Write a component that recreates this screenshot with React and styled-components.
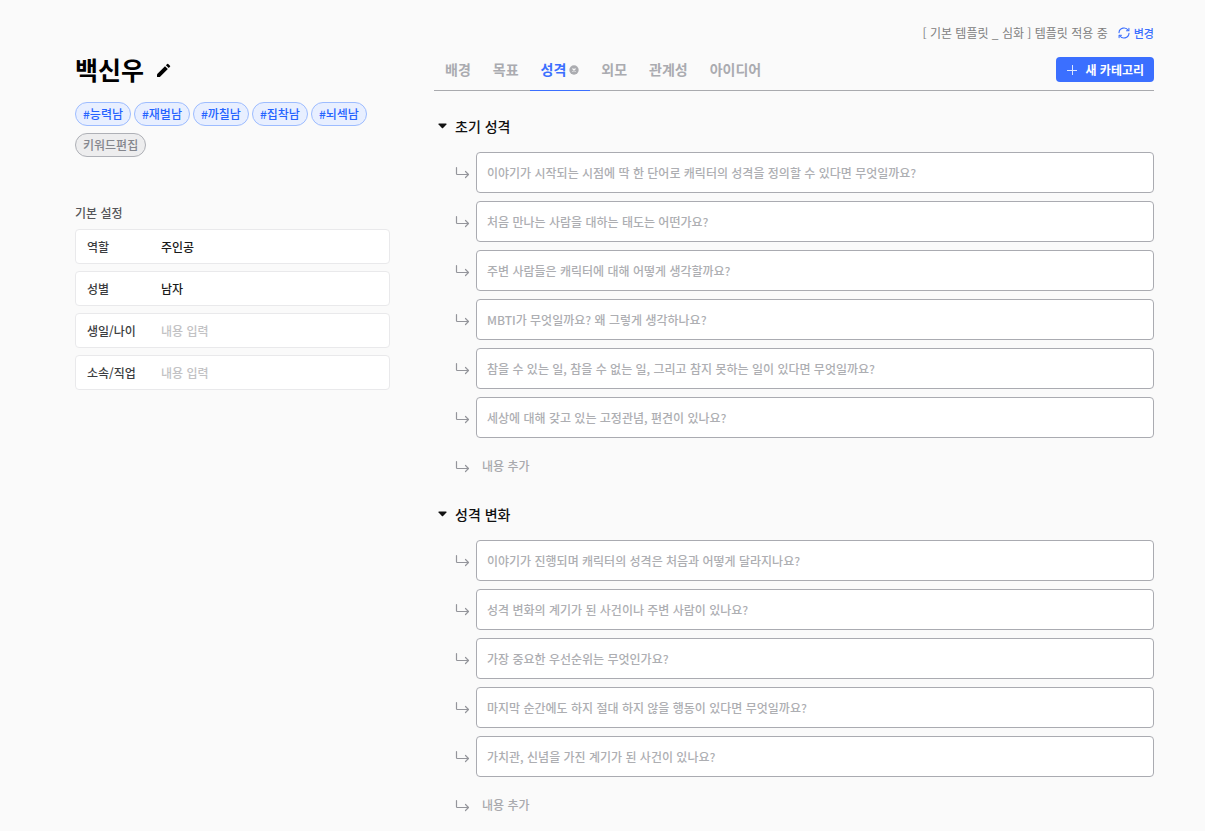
import React, { useState } from "react";
import styled, { createGlobalStyle } from "styled-components";

const GlobalStyle = createGlobalStyle`
  *, *::before, *::after { box-sizing: border-box; }
  body {
    margin: 0;
    background: #fafafa;
    color: #1a1a1a;
    font-family: "Noto Sans CJK KR", "Noto Sans KR", "Noto Sans CJK JP", sans-serif;
    font-size: 12px;
    line-height: 20px;
  }
  button, input { font: inherit; color: inherit; }
  button { border: 0; padding: 0; background: none; cursor: pointer; }
  h1, h2, p { margin: 0; }
  svg { display: block; flex: none; }
`;

const Page = styled.main`
  display: grid;
  grid-template-columns: 315px minmax(0, 1fr);
  column-gap: 44px;
  padding: 23px 51px 16px 75px;
`;

const Profile = styled.aside`
  padding-top: 28px;
`;

const NameRow = styled.div`
  display: flex;
  align-items: center;
  gap: 12px;
`;

const Name = styled.h1`
  color: #000;
  font-size: 25px;
  line-height: 36px;
  font-weight: 700;
`;

const Keywords = styled.div`
  display: flex;
  flex-wrap: wrap;
  gap: 7px 3px;
  margin-top: 15px;
`;

const Keyword = styled.span`
  height: 24px;
  padding: 0 7px;
  border: 1px solid #9dbcff;
  border-radius: 12px;
  background: #e8efff;
  color: #2563ff;
  line-height: 22px;
  font-weight: 500;
`;

const KeywordEdit = styled.button`
  height: 24px;
  padding: 0 7px;
  border: 1px solid #aeb0b6;
  border-radius: 12px;
  background: #ededee;
  color: #84868d;
  line-height: 20px;
  font-weight: 500;
`;

const SettingsTitle = styled.h2`
  margin: 46px 0 6px;
  color: #555559;
  font-size: 12px;
  line-height: 20px;
  font-weight: 500;
`;

const Settings = styled.div`
  display: grid;
  gap: 7px;
`;

const Setting = styled.label`
  display: flex;
  align-items: center;
  height: 35px;
  padding: 0 11px;
  border: 1px solid #e9e9eb;
  border-radius: 4px;
  background: #fff;
`;

const SettingLabel = styled.span`
  flex: none;
  width: 74px;
  color: #3c3d40;
  font-weight: 500;
`;

const SettingInput = styled.input`
  flex: 1;
  min-width: 0;
  height: 24px;
  padding: 0;
  border: 0;
  outline: 0;
  background: none;
  font-weight: 500;
  &::placeholder { color: #c2c2c4; opacity: 1; }
`;

const TemplateBar = styled.div`
  display: flex;
  justify-content: flex-end;
  align-items: center;
  gap: 10px;
  color: #808080;
`;

const ChangeButton = styled.button`
  display: flex;
  align-items: center;
  gap: 4px;
  color: #3b6fff;
  font-size: 11px;
  font-weight: 500;
`;

const TabBar = styled.div`
  display: flex;
  justify-content: space-between;
  margin-top: 9px;
  border-bottom: 1px solid #a9aaae;
`;

const TabList = styled.div`
  display: flex;
  margin-bottom: -1px;
`;

const Tab = styled.div`
  display: flex;
  align-items: center;
  gap: 3px;
  height: 39px;
  padding: 0 11px 4px;
  border-bottom: 1px solid ${(p) => (p.$active ? "#3b6fff" : "transparent")};
  color: ${(p) => (p.$active ? "#3b6fff" : "#aaabb0")};
`;

const TabButton = styled.button`
  font-size: 14px;
  font-weight: 700;
`;

const NewCategory = styled.button`
  display: flex;
  align-items: center;
  gap: 8px;
  height: 25px;
  margin-top: 5px;
  padding: 0 10px 0 11px;
  border-radius: 4px;
  background: #3b6fff;
  color: #fff;
  font-weight: 700;
`;

const Section = styled.section`
  margin-top: ${(p) => (p.$first ? 25 : 28)}px;
`;

const SectionTitle = styled.h2`
  font-size: 14px;
  line-height: 20px;
  font-weight: 500;
`;

const Toggle = styled.button`
  display: flex;
  align-items: center;
  gap: 8px;
  padding-left: 4px;
  color: #111;
`;

const Questions = styled.div`
  display: grid;
  gap: 8px;
  margin-top: 16px;
  padding-left: 21px;
`;

const Question = styled.label`
  display: flex;
  align-items: center;
  gap: 6px;
`;

const QuestionInput = styled.input`
  flex: 1;
  min-width: 0;
  height: 41px;
  padding: 0 10px;
  border: 1px solid #aaabb1;
  border-radius: 4px;
  outline: 0;
  background: #fff;
  font-weight: 500;
  &::placeholder { color: #adaeb2; opacity: 1; }
`;

const AddButton = styled.button`
  display: flex;
  align-items: center;
  gap: 12px;
  margin: 18px 0 0 21px;
  color: #a8a9ad;
  font-weight: 500;
`;

const PencilIcon = () => (
  <svg width="15" height="17" viewBox="0 -2 15 17" fill="#000" aria-hidden="true">
    <path d="M1 11.2 9 3.2 11.8 6 3.8 14H1.6Q1 14 1 13.4Z" />
    <path d="M9.9 2.3 11.2 1Q11.7.5 12.2 1L14 2.8Q14.5 3.3 14 3.8L12.7 5.1Z" />
  </svg>
);

const RefreshIcon = () => (
  <svg width="12" height="12" viewBox="0 0 12 12" fill="none" stroke="#3b6fff" strokeWidth="1.1" strokeLinecap="round" strokeLinejoin="round" aria-hidden="true">
    <path d="M1 5.6A5 5 0 0 1 10.3 3.5M11 6.4A5 5 0 0 1 1.7 8.5" />
    <path d="M10.9 1.4V3.8H8.5M1.1 10.6V8.2H3.5" />
  </svg>
);

const PlusIcon = () => (
  <svg width="10" height="10" viewBox="0 0 10 10" stroke="#dce6ff" aria-hidden="true">
    <path d="M0 5.5H10M5.5 0V10" />
  </svg>
);

const CloseIcon = () => (
  <svg width="10" height="11" viewBox="0 0 10 11" aria-hidden="true">
    <circle cx="5" cy="6" r="4.7" fill="#abacb0" />
    <path d="M3.5 4.5 6.5 7.5M6.5 4.5 3.5 7.5" stroke="#fafafa" strokeWidth="1.1" />
  </svg>
);

const CaretIcon = () => (
  <svg width="9" height="6" viewBox="0 0 9 6" aria-hidden="true">
    <path d="M.8.5H8.2Q8.9.8 8.4 1.5L5.1 5Q4.5 5.6 3.9 5L.6 1.5Q.1.8.8.5Z" fill="#111" />
  </svg>
);

const BranchIcon = () => (
  <svg width="15" height="13" viewBox="0 0 15 13" fill="none" stroke="#94959b" strokeWidth="1.2" strokeLinecap="round" strokeLinejoin="round" aria-hidden="true">
    <path d="M1.5 1.5V7.7Q1.5 8.5 2.3 8.5H13.5M10.5 5.5 13.5 8.5 10.5 11.5" />
  </svg>
);

const keywords = ["#능력남", "#재벌남", "#까칠남", "#집착남", "#뇌섹남"];

const settings = [
  { label: "역할", value: "주인공" },
  { label: "성별", value: "남자" },
  { label: "생일/나이", value: "" },
  { label: "소속/직업", value: "" },
];

const tabs = ["배경", "목표", "성격", "외모", "관계성", "아이디어"];

const sections = [
  {
    title: "초기 성격",
    questions: [
      "이야기가 시작되는 시점에 딱 한 단어로 캐릭터의 성격을 정의할 수 있다면 무엇일까요?",
      "처음 만나는 사람을 대하는 태도는 어떤가요?",
      "주변 사람들은 캐릭터에 대해 어떻게 생각할까요?",
      "MBTI가 무엇일까요? 왜 그렇게 생각하나요?",
      "참을 수 있는 일, 참을 수 없는 일, 그리고 참지 못하는 일이 있다면 무엇일까요?",
      "세상에 대해 갖고 있는 고정관념, 편견이 있나요?",
    ],
  },
  {
    title: "성격 변화",
    questions: [
      "이야기가 진행되며 캐릭터의 성격은 처음과 어떻게 달라지나요?",
      "성격 변화의 계기가 된 사건이나 주변 사람이 있나요?",
      "가장 중요한 우선순위는 무엇인가요?",
      "마지막 순간에도 하지 절대 하지 않을 행동이 있다면 무엇일까요?",
      "가치관, 신념을 가진 계기가 된 사건이 있나요?",
    ],
  },
];

export default function App() {
  const [active, setActive] = useState("성격");

  return (
    <>
      <GlobalStyle />
      <Page lang="ko">
        <Profile>
          <NameRow>
            <Name>백신우</Name>
            <button type="button" aria-label="이름 수정"><PencilIcon /></button>
          </NameRow>
          <Keywords>
            {keywords.map((k) => <Keyword key={k}>{k}</Keyword>)}
            <KeywordEdit type="button">키워드편집</KeywordEdit>
          </Keywords>
          <SettingsTitle>기본 설정</SettingsTitle>
          <Settings>
            {settings.map((s) => (
              <Setting key={s.label}>
                <SettingLabel>{s.label}</SettingLabel>
                <SettingInput type="text" defaultValue={s.value} placeholder="내용 입력" />
              </Setting>
            ))}
          </Settings>
        </Profile>

        <div>
          <TemplateBar>
            <p>[ 기본 템플릿 _ 심화 ] 템플릿 적용 중</p>
            <ChangeButton type="button"><RefreshIcon />변경</ChangeButton>
          </TemplateBar>
          <TabBar>
            <TabList>
              {tabs.map((t) => (
                <Tab key={t} $active={t === active}>
                  <TabButton type="button" onClick={() => setActive(t)}>{t}</TabButton>
                  {t === active && <button type="button" aria-label={`${t} 삭제`}><CloseIcon /></button>}
                </Tab>
              ))}
            </TabList>
            <NewCategory type="button"><PlusIcon />새 카테고리</NewCategory>
          </TabBar>

          {sections.map((s, i) => (
            <Section key={s.title} $first={i === 0}>
              <SectionTitle>
                <Toggle type="button" aria-expanded="true"><CaretIcon />{s.title}</Toggle>
              </SectionTitle>
              <Questions>
                {s.questions.map((q) => (
                  <Question key={q}>
                    <BranchIcon />
                    <QuestionInput type="text" aria-label={q} placeholder={q} />
                  </Question>
                ))}
              </Questions>
              <AddButton type="button"><BranchIcon />내용 추가</AddButton>
            </Section>
          ))}
        </div>
      </Page>
    </>
  );
}
